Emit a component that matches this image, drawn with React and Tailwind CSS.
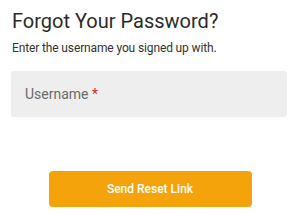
import React from "react";

export default function App() {
  return (
    <div className="w-[300px] h-[215px] bg-white font-['Roboto',sans-serif] px-[11px] pt-[9px]">
      <h1 className="text-[20px] leading-[24px] text-[#2b2b2b] pl-[1px]">
        Forgot Your Password?
      </h1>
      <p className="mt-[8px] text-[12px] leading-[14px] tracking-[-0.13px] text-[#333] pl-[1px]">
        Enter the username you signed up with.
      </p>

      <div className="mt-[16px] h-[46px] w-[276px] rounded-[3px] bg-[#eeeeee] flex items-center px-[14px]">
        <span className="text-[14px] text-[#6b6b6b]">
          Username <span className="text-[#d32f2f]">*</span>
        </span>
      </div>

      <div className="mt-[54px] flex justify-center">
        <button
          type="button"
          className="h-[36px] w-[203px] rounded-[4px] bg-[#f5a30a] text-white text-[12px] font-medium"
        >
          Send Reset Link
        </button>
      </div>
    </div>
  );
}
